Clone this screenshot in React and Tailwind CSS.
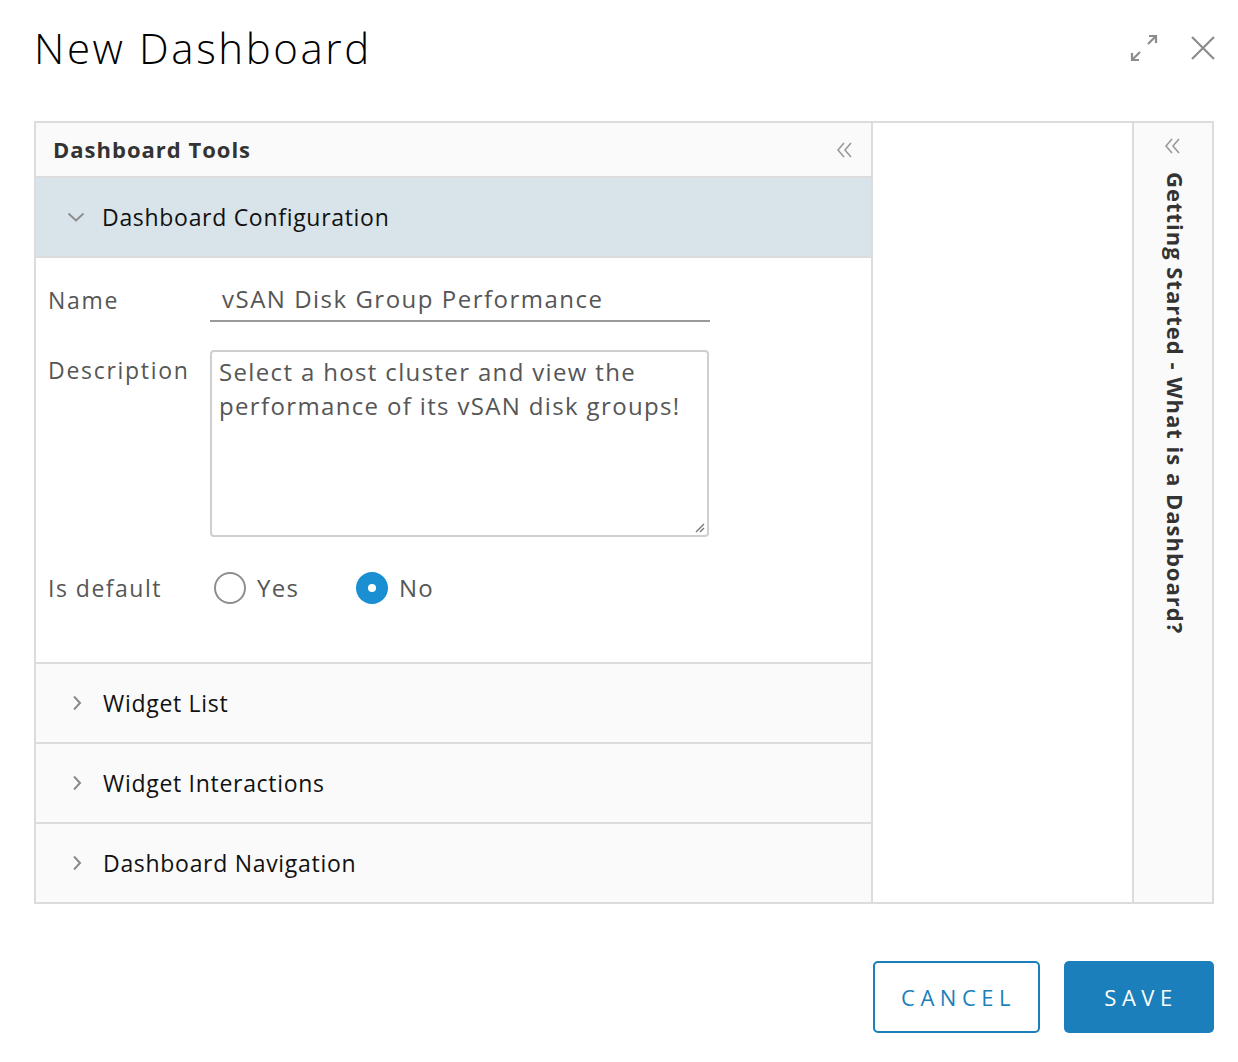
import React from 'react';

const font = { fontFamily: '"Open Sans", "Noto Sans", sans-serif' };

const DoubleLeft = ({ className }) => (
  <svg viewBox="0 0 18 16" className={className} fill="none" stroke="currentColor" strokeWidth="1.6">
    <path d="M8 1 L2 8 L8 15" />
    <path d="M15 1 L9 8 L15 15" />
  </svg>
);

const ChevronRight = () => (
  <svg viewBox="0 0 10 16" className="w-[10px] h-[16px] text-[#8a8a8a]" fill="none" stroke="currentColor" strokeWidth="2">
    <path d="M2 1.5 L8 8 L2 14.5" />
  </svg>
);

const ChevronDown = () => (
  <svg viewBox="0 0 18 10" className="w-[18px] h-[10px] text-[#8a8a8a]" fill="none" stroke="currentColor" strokeWidth="1.8">
    <path d="M1.5 1.5 L9 8.5 L16.5 1.5" />
  </svg>
);

const Section = ({ title }) => (
  <div className="h-[80px] flex items-center gap-[21px] pl-[36px] bg-[#fafafa] border-t-2 border-[#dcdcdc]">
    <ChevronRight />
    <span className="text-[23px] text-[#111] tracking-[0.7px]">{title}</span>
  </div>
);

export default function App() {
  return (
    <div className="w-[1238px] h-[1062px] bg-white text-[#333]" style={font}>
      <div className="h-[121px] flex items-start justify-between pl-[34px] pr-[22px] pt-[20px]">
        <h1 className="text-[42px] font-light text-black leading-[56px] tracking-[2.6px]">New Dashboard</h1>
        <div className="flex items-center gap-[32px] pt-[14px]">
          <svg viewBox="0 0 28 28" className="w-[28px] h-[28px] text-[#8c8c8c]" fill="none" stroke="currentColor" strokeWidth="2.2">
            <path d="M26 2 L18 10" />
            <path d="M19 2 H26 V9" />
            <path d="M2 26 L10 18" />
            <path d="M2 19 V26 H9" />
          </svg>
          <svg viewBox="0 0 26 26" className="w-[26px] h-[26px] text-[#8c8c8c]" fill="none" stroke="currentColor" strokeWidth="2.2">
            <path d="M2 2 L24 24 M24 2 L2 24" />
          </svg>
        </div>
      </div>

      <div className="ml-[34px] mr-[24px] h-[783px] border-2 border-[#dcdcdc] flex">
        <div className="w-[837px] flex flex-col border-r-2 border-[#dcdcdc]">
          <div className="h-[53px] flex items-center justify-between pl-[17px] pr-[17px] bg-[#fafafa]">
            <span className="text-[22px] font-bold text-[#333] tracking-[1px]">Dashboard Tools</span>
            <DoubleLeft className="w-[18px] h-[16px] text-[#999]" />
          </div>
          <div className="h-[80px] flex items-center gap-[17px] pl-[31px] bg-[#d9e4ea] border-t-2 border-[#dcdcdc]">
            <ChevronDown />
            <span className="text-[23px] text-[#111] tracking-[0.7px]">Dashboard Configuration</span>
          </div>
          <div className="h-[406px] bg-white border-t-2 border-[#dcdcdc] pl-[12px] pt-[22px] text-[#565656]">
            <div className="flex items-start">
              <span className="w-[162px] text-[23px] leading-[40px] tracking-[1.7px]">Name</span>
              <div className="w-[500px] h-[42px] border-b-2 border-[#9a9a9a] pl-[12px] text-[24px] leading-[38px] tracking-[1.5px]">
                vSAN Disk Group Performance
              </div>
            </div>
            <div className="flex items-start mt-[28px]">
              <span className="w-[162px] text-[23px] leading-[40px] tracking-[1.7px]">Description</span>
              <div className="relative w-[499px] h-[187px] border-2 border-[#cfcfcf] rounded-[4px] px-[7px] pt-[3px] text-[24px] leading-[34px] tracking-[1.35px]">
                Select a host cluster and view the performance of its vSAN disk groups!
                <svg viewBox="0 0 12 12" className="absolute right-[2px] bottom-[2px] w-[12px] h-[12px] text-[#777]" fill="none" stroke="currentColor" strokeWidth="1.4">
                  <path d="M11 3 L3 11 M11 7 L7 11" />
                </svg>
              </div>
            </div>
            <div className="flex items-center mt-[31px]">
              <span className="w-[166px] text-[23px] leading-[40px] tracking-[1.5px]">Is default</span>
              <div className="flex items-center gap-[11px] w-[142px]">
                <span className="w-[32px] h-[32px] rounded-full border-2 border-[#8e8e8e] bg-white" />
                <span className="text-[24px] tracking-[1.3px]">Yes</span>
              </div>
              <div className="flex items-center gap-[11px]">
                <span className="w-[32px] h-[32px] rounded-full bg-[#1a8fd1] flex items-center justify-center">
                  <span className="w-[8px] h-[8px] rounded-full bg-white" />
                </span>
                <span className="text-[24px] tracking-[1.3px]">No</span>
              </div>
            </div>
          </div>
          <Section title="Widget List" />
          <Section title="Widget Interactions" />
          <Section title="Dashboard Navigation" />
        </div>

        <div className="w-[261px] bg-white border-r-2 border-[#dcdcdc]" />

        <div className="flex-1 bg-[#fafafa] flex flex-col items-center pt-[15px]">
          <DoubleLeft className="w-[18px] h-[16px] text-[#999]" />
          <span className="mt-[18px] ml-[5px] text-[22px] font-bold text-[#333] [writing-mode:vertical-rl] leading-[26px] tracking-[1px]">
            Getting Started - What is a Dashboard?
          </span>
        </div>
      </div>

      <div className="flex justify-end gap-[24px] mr-[24px] mt-[57px]">
        <button className="w-[167px] h-[72px] rounded-[5px] border-2 border-[#1a7fbb] bg-white text-[#1a7fbb] text-[22px] tracking-[5.5px] pl-[4px]">
          CANCEL
        </button>
        <button className="w-[150px] h-[72px] rounded-[5px] bg-[#1a7fbb] text-white text-[22px] tracking-[5.5px] pl-[4px]">
          SAVE
        </button>
      </div>
    </div>
  );
}
